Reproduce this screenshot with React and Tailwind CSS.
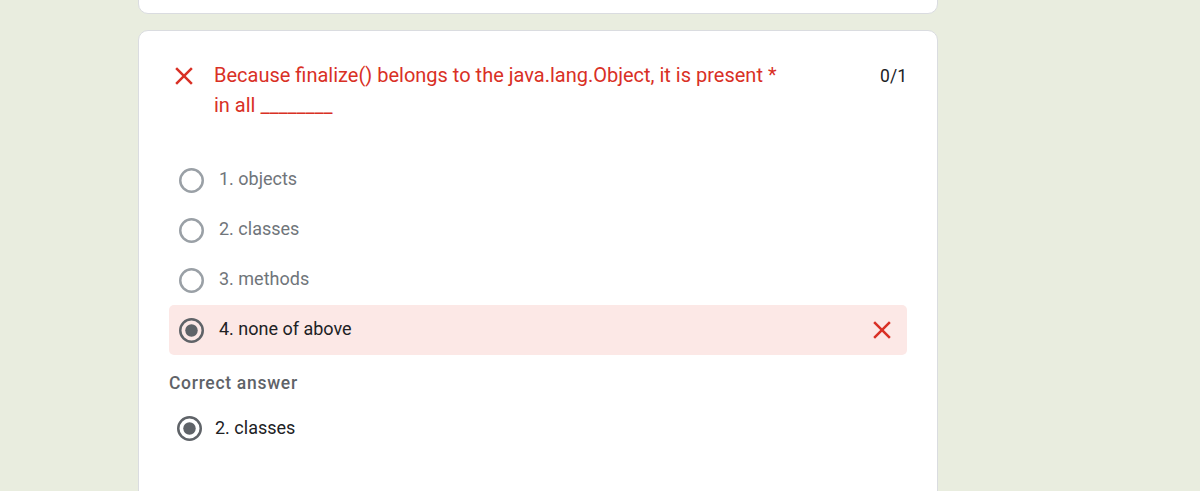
const CloseIcon = ({ className }) => (
  <svg viewBox="0 0 24 24" className={className} fill="currentColor">
    <path d="M19 6.41L17.59 5 12 10.59 6.41 5 5 6.41 10.59 12 5 17.59 6.41 19 12 13.41 17.59 19 19 17.59 13.41 12z" />
  </svg>
);

const Radio = ({ checked }) => (
  <svg viewBox="0 0 25 25" className="w-[25px] h-[25px] shrink-0">
    <circle
      cx="12.5"
      cy="12.5"
      r="11.25"
      fill="none"
      stroke={checked ? "#5f6368" : "#9aa0a6"}
      strokeWidth="2.5"
    />
    {checked && <circle cx="12.5" cy="12.5" r="6.25" fill="#5f6368" />}
  </svg>
);

const options = ["1. objects", "2. classes", "3. methods", "4. none of above"];
const picked = 3;

export default function App() {
  return (
    <div
      className="min-h-screen bg-[#e9eddf] overflow-hidden"
      style={{ fontFamily: "Roboto, 'Liberation Sans', sans-serif" }}
    >
      <div className="w-[800px] ml-[138px]">
        {/* previous card, cut off above */}
        <div className="h-[12px] -mt-[10px] pt-[10px] bg-white border border-[#dadce0] rounded-b-[10px] box-content" />

        {/* QUESTION CARD */}
        <div className="mt-[16px] h-[480px] bg-white border border-[#dadce0] rounded-[10px] px-[30px] pt-[30px]">
          <div className="flex items-start">
            <CloseIcon className="w-[30px] h-[30px] text-[#d93025] shrink-0" />
            <div className="ml-[15px] -mt-[1px] mb-[1px] w-[580px] text-[20px] leading-[30px] text-[#d93025]">
              Because finalize() belongs to the java.lang.Object, it is present *
              <br />
              in all ________
            </div>
            <div className="ml-auto text-[17.5px] leading-[30px] text-[#202124]">0/1</div>
          </div>

          <div className="mt-[34px]">
            {options.map((opt, i) => (
              <div
                key={opt}
                className={
                  "h-[50px] flex items-center pl-[10px] pr-[10px] rounded-[5px] " +
                  (i === picked ? "bg-[#fce8e6]" : "")
                }
              >
                <Radio checked={i === picked} />
                <span
                  className={
                    "ml-[15px] text-[18px] leading-[24px] -mt-[2px] " +
                    (i === picked ? "text-[#202124]" : "text-[#70757a]")
                  }
                >
                  {opt}
                </span>
                {i === picked && (
                  <CloseIcon className="ml-auto w-[30px] h-[30px] text-[#d93025]" />
                )}
              </div>
            ))}
          </div>

          {/* CORRECT ANSWER */}
          <div className="mt-[16px] text-[17.5px] leading-[24px] font-medium tracking-[0.7px] text-[#5f6368]">
            Correct answer
          </div>
          <div className="mt-[8px] h-[50px] flex items-center pl-[8px]">
            <Radio checked />
            <span className="ml-[13px] text-[18px] leading-[24px] -mt-[1px] text-[#202124]">2. classes</span>
          </div>
        </div>
      </div>
    </div>
  );
}
